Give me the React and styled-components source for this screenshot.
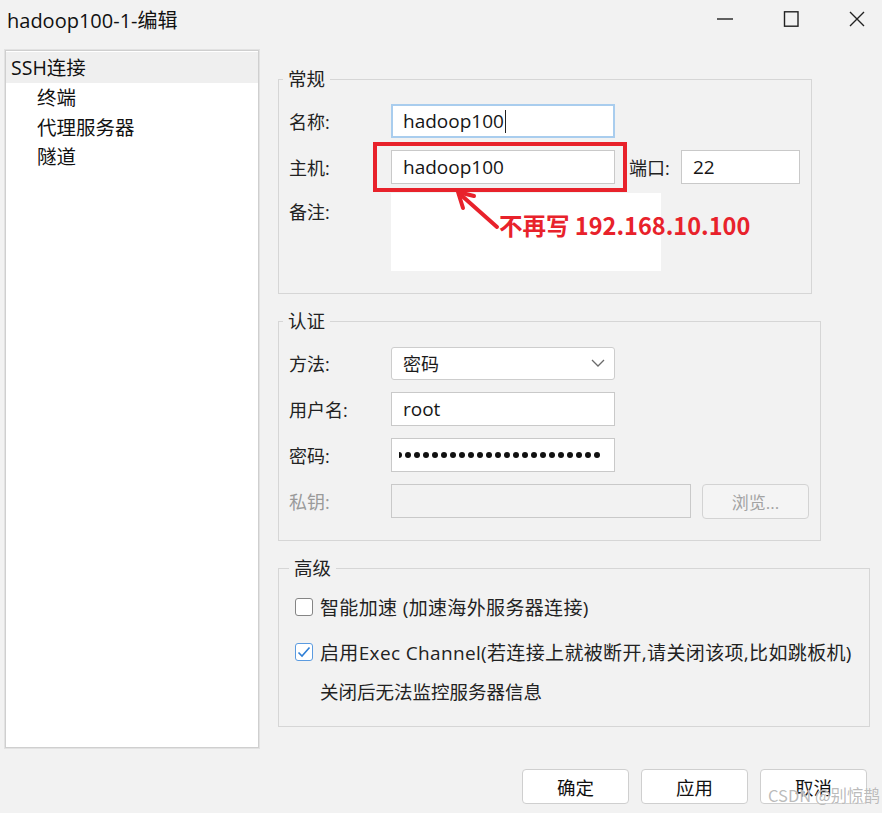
import styled, { createGlobalStyle } from 'styled-components'

const GlobalStyle = createGlobalStyle`
html, body {
  margin: 0;
  padding: 0;
  background: #f2f2f2;
}
body {
  font-family: "Open Sans", "Noto Sans CJK SC", sans-serif;
  color: #1b1b1b;
}
`;

const App = () => {
    return (
        <Window>
            <GlobalStyle />
            <TitleBar>
                <Title>hadoop100-1-编辑</Title>
                <Controls>
                    <svg width="16" height="16" viewBox="0 0 16 16">
                        <line x1="0" y1="8" x2="16" y2="8" stroke="#222" strokeWidth="1.4" />
                    </svg>
                    <svg width="16" height="16" viewBox="0 0 16 16">
                        <rect x="1.5" y="0.8" width="13.5" height="14.4" fill="none" stroke="#222" strokeWidth="1.4" />
                    </svg>
                    <svg width="16" height="16" viewBox="0 0 16 16">
                        <path d="M1 1 L15 15 M15 1 L1 15" stroke="#222" strokeWidth="1.4" />
                    </svg>
                </Controls>
            </TitleBar>

            <Body>
                <Tree>
                    <TreeItem selected>SSH连接</TreeItem>
                    <TreeItem child>终端</TreeItem>
                    <TreeItem child>代理服务器</TreeItem>
                    <TreeItem child>隧道</TreeItem>
                </Tree>

                <Column>
                    <Group width={534}>
                        <Legend>常规</Legend>
                        <Row>
                            <Label>名称:</Label>
                            <Input focused width={224}>
                                hadoop100<Caret />
                            </Input>
                        </Row>
                        <Row>
                            <Label>主机:</Label>
                            <Input width={224}>hadoop100</Input>
                            <PortLabel>端口:</PortLabel>
                            <Input width={119}>22</Input>
                        </Row>
                        <Row tall>
                            <Label top>备注:</Label>
                            <NoteArea />
                        </Row>
                    </Group>

                    <Group width={543}>
                        <Legend>认证</Legend>
                        <Row>
                            <Label>方法:</Label>
                            <Select>
                                密码
                                <svg width="14" height="8" viewBox="0 0 14 8">
                                    <path d="M1 1 L7 7 L13 1" fill="none" stroke="#6a6a6a" strokeWidth="1.3" />
                                </svg>
                            </Select>
                        </Row>
                        <Row>
                            <Label>用户名:</Label>
                            <Input width={224}>root</Input>
                        </Row>
                        <Row>
                            <Label>密码:</Label>
                            <Input width={224}>
                                <Dots>
                                    <Dot half />
                                    {Array.from({ length: 22 }).map((_, i) => <Dot key={i} />)}
                                </Dots>
                            </Input>
                        </Row>
                        <Row>
                            <Label disabled>私钥:</Label>
                            <Input disabled width={300} />
                            <BrowseButton>浏览...</BrowseButton>
                        </Row>
                    </Group>

                    <Group width={592} advanced>
                        <Legend>高级</Legend>
                        <CheckRow>
                            <CheckBox />
                            智能加速 (加速海外服务器连接)
                        </CheckRow>
                        <CheckRow>
                            <CheckBox checked>
                                <svg width="14" height="12" viewBox="0 0 14 12">
                                    <path d="M1.5 6.5 L5 10 L12.5 1.5" fill="none" stroke="#2f7fd6" strokeWidth="1.6" />
                                </svg>
                            </CheckBox>
                            启用Exec Channel(若连接上就被断开,请关闭该项,比如跳板机)
                        </CheckRow>
                        <NoteLine>关闭后无法监控服务器信息</NoteLine>
                    </Group>
                </Column>
            </Body>

            <Footer>
                <Button>确定</Button>
                <Button>应用</Button>
                <Button>取消</Button>
            </Footer>

            {/* annotation drawn on top of the screenshot */}
            <Highlight />
            <Arrow width="60" height="50" viewBox="0 0 60 50">
                <path d="M42 38 L6 6" stroke="#e8222b" strokeWidth="4" strokeLinecap="round" />
                <path d="M3 3 L19 7 M3 3 L8 19" stroke="#e8222b" strokeWidth="4" strokeLinecap="round" />
            </Arrow>
            <Callout>不再写 192.168.10.100</Callout>
            <Watermark>CSDN @别惊鹊</Watermark>
        </Window>
    )
}

const Window = styled.div`
position: relative;
width: 882px;
height: 813px;
overflow: hidden;
background: #f2f2f2;
`;

const TitleBar = styled.div`
height: 42px;
display: flex;
align-items: center;
justify-content: space-between;
padding-left: 7px;
`;

const Title = styled.div`
font-size: 20px;
color: #111;
margin-top: -4px;
`;

const Controls = styled.div`
display: flex;
align-items: center;
gap: 50px;
padding-right: 17px;
margin-top: -4px;
`;

const Body = styled.div`
display: flex;
padding: 8px 0 0 5px;
height: 697px;
`;

const Tree = styled.div`
width: 252px;
height: 695px;
background: #fff;
border: 1px solid #cfcfcf;
box-shadow: 0 0 0 1px #e2e2e2;
padding-top: 1px;
`;

const TreeItem = styled.div`
height: ${p => (p.selected ? '31px' : '29.5px')};
line-height: ${p => (p.selected ? '31px' : '29.5px')};
padding-left: ${p => (p.child ? '31px' : '5px')};
font-size: 19.5px;
background: ${p => (p.selected ? '#efefef' : 'transparent')};
color: #111;
`;

const Column = styled.div`
margin-left: 19px;
padding-top: 19px;
display: flex;
flex-direction: column;
gap: 17px;
`;

const Group = styled.fieldset`
box-sizing: border-box;
width: ${p => p.width}px;
margin: 0;
border: 1px solid #d6d6d6;
padding: ${p => (p.advanced ? '14px 10px 24px 16px' : '15px 10px 22px 10px')};
display: flex;
flex-direction: column;
gap: ${p => (p.advanced ? '15px' : '12px')};
`;

const Legend = styled.legend`
font-size: 18.5px;
line-height: 20px;
padding: 0 5px;
margin-left: -6px;
color: #222;
`;

const Row = styled.div`
display: flex;
align-items: ${p => (p.tall ? 'flex-start' : 'center')};
height: ${p => (p.tall ? '75px' : '34px')};
`;

const Label = styled.div`
width: 102px;
flex-shrink: 0;
font-size: 18px;
color: ${p => (p.disabled ? '#9a9a9a' : '#222')};
margin-top: ${p => (p.top ? '2px' : '0')};
`;

const Input = styled.div`
box-sizing: border-box;
width: ${p => p.width}px;
height: 34px;
display: flex;
align-items: center;
padding-left: 11px;
font-size: 19px;
color: #161616;
background: ${p => (p.disabled ? '#f2f2f2' : '#fff')};
border: ${p => (p.focused ? '2px solid #a9cdee' : '1px solid #c9c9c9')};
${p => p.focused && 'padding-left: 10px;'}
`;

const Caret = styled.span`
display: inline-block;
width: 1px;
height: 23px;
margin-left: 1px;
background: #222;
`;

const PortLabel = styled.div`
width: 52px;
margin-left: 14px;
font-size: 18px;
color: #222;
`;

const NoteArea = styled.div`
width: 270px;
height: 78px;
margin-top: -3px;
background: #fff;
`;

const Select = styled.div`
box-sizing: border-box;
width: 224px;
height: 33px;
display: flex;
align-items: center;
justify-content: space-between;
padding: 0 9px 0 11px;
font-size: 18px;
background: #fff;
border: 1px solid #cdcdcd;
border-radius: 3px;
`;

const Dots = styled.div`
display: flex;
align-items: center;
gap: 3px;
margin-left: -4px;
`;

const Dot = styled.span`
display: inline-block;
width: ${p => (p.half ? '3px' : '6px')};
height: 6px;
border-radius: ${p => (p.half ? '0 3px 3px 0' : '50%')};
background: #111;
`;

const BrowseButton = styled.div`
box-sizing: border-box;
width: 107px;
height: 35px;
margin-left: 11px;
display: flex;
align-items: center;
justify-content: center;
font-size: 17px;
color: #a3a3a3;
border: 1px solid #d3d3d3;
border-radius: 4px;
background: #f4f4f4;
`;

const CheckRow = styled.div`
display: flex;
align-items: center;
gap: 7px;
height: 30px;
font-size: 19px;
letter-spacing: 0.35px;
white-space: nowrap;
color: #222;
`;

const CheckBox = styled.div`
box-sizing: border-box;
flex-shrink: 0;
width: 18px;
height: 18px;
display: flex;
align-items: center;
justify-content: center;
border: 1px solid ${p => (p.checked ? '#5b9be0' : '#858585')};
border-radius: 3px;
background: #fff;
`;

const NoteLine = styled.div`
height: 20px;
line-height: 20px;
padding-left: 25px;
font-size: 18.5px;
color: #222;
`;

const Footer = styled.div`
display: flex;
justify-content: flex-end;
gap: 12px;
padding: 22px 15px 0 0;
`;

const Button = styled.div`
box-sizing: border-box;
width: 107px;
height: 35px;
display: flex;
align-items: center;
justify-content: center;
font-size: 18.5px;
color: #111;
background: #fff;
border: 1px solid #cfcfcf;
border-radius: 4px;
`;

const Highlight = styled.div`
position: absolute;
left: 373px;
top: 142px;
width: 246px;
height: 42px;
border: 4px solid #e8222b;
`;

const Arrow = styled.svg`
position: absolute;
left: 455px;
top: 189px;
`;

const Callout = styled.div`
position: absolute;
left: 499px;
top: 210px;
font-family: "Noto Sans CJK SC", sans-serif;
font-weight: 700;
font-size: 23.5px;
line-height: 30px;
color: #e8222b;
`;

const Watermark = styled.div`
position: absolute;
right: 2px;
bottom: 6px;
font-family: "Noto Sans CJK SC", sans-serif;
font-size: 16.5px;
color: rgba(175, 175, 175, 0.85);
text-shadow: 0 0 1px #fff;
`;

export default App;
